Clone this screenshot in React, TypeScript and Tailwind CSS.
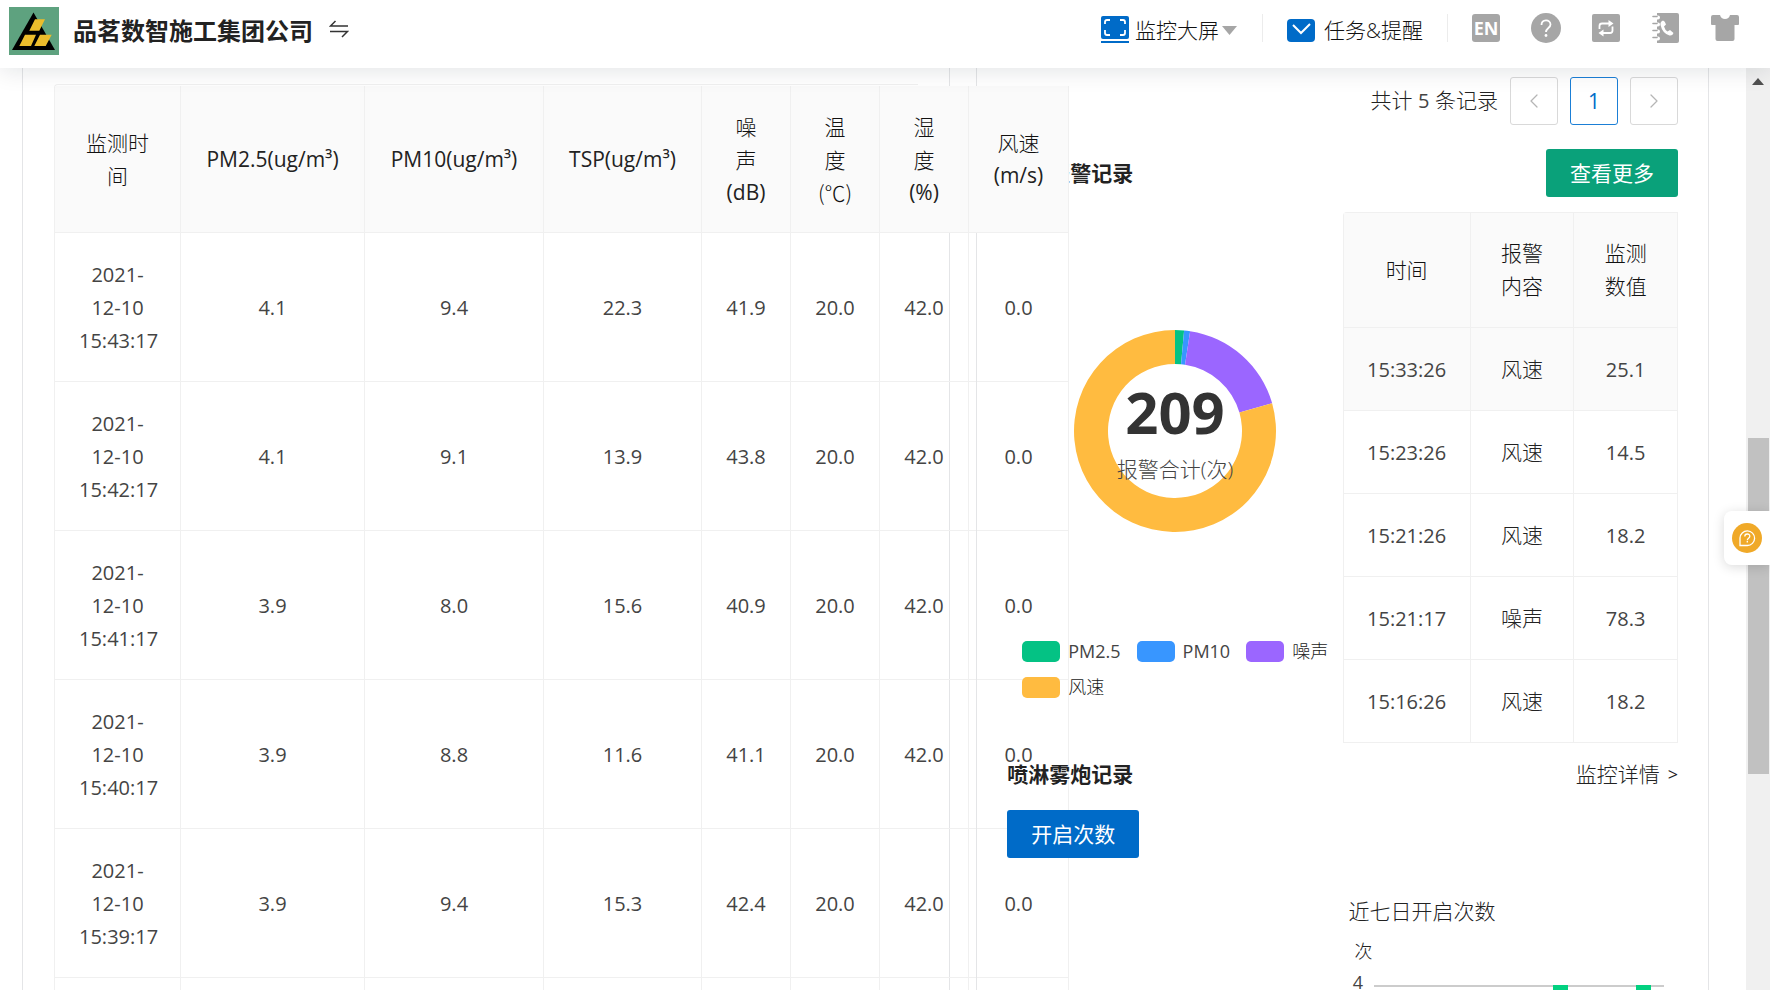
import { ChevronLeft, ChevronRight } from "lucide-react";
import type { ReactNode } from "react";

const readings = [
  { date: "2021-12-10", time: "15:43:17", values: ["4.1", "9.4", "22.3", "41.9", "20.0", "42.0", "0.0"] },
  { date: "2021-12-10", time: "15:42:17", values: ["4.1", "9.1", "13.9", "43.8", "20.0", "42.0", "0.0"] },
  { date: "2021-12-10", time: "15:41:17", values: ["3.9", "8.0", "15.6", "40.9", "20.0", "42.0", "0.0"] },
  { date: "2021-12-10", time: "15:40:17", values: ["3.9", "8.8", "11.6", "41.1", "20.0", "42.0", "0.0"] },
  { date: "2021-12-10", time: "15:39:17", values: ["3.9", "9.4", "15.3", "42.4", "20.0", "42.0", "0.0"] },
  { date: "2021-12-10", time: "15:38:17", values: ["3.9", "9.0", "14.8", "41.6", "20.0", "42.0", "0.0"] },
];

const readingHeads = [
  { title: ["监测时", "间"] },
  { unit: "PM2.5(ug/m³)" },
  { unit: "PM10(ug/m³)" },
  { unit: "TSP(ug/m³)" },
  { title: ["噪", "声"], unit: "(dB)" },
  { title: ["温", "度", "(℃)"] },
  { title: ["湿", "度"], unit: "(%)" },
  { title: ["风速"], unit: "(m/s)" },
];

const alarms = [
  ["15:33:26", "风速", "25.1"],
  ["15:23:26", "风速", "14.5"],
  ["15:21:26", "风速", "18.2"],
  ["15:21:17", "噪声", "78.3"],
  ["15:16:26", "风速", "18.2"],
];

const alarmTypes = [
  { name: "PM2.5", count: 3, color: "#04c284" },
  { name: "PM10", count: 2, color: "#3896ff" },
  { name: "噪声", count: 38, color: "#9b66ff" },
  { name: "风速", count: 166, color: "#ffbb40" },
];

const weeklyStarts = [1, 0, 2, 1, 4, 2, 4];

function TopBar() {
  return (
    <header className="relative z-30 flex h-[68px] shrink-0 items-start justify-between bg-white shadow-[0_2px_24px_rgba(0,21,41,0.12)]">
      <div className="flex h-[62px] items-center pl-[9px]">
        <svg viewBox="0 0 50 48" className="h-12 w-[50px]" aria-hidden>
          <rect width="50" height="48" fill="#5ea27f" />
          <path d="M24.500 5.500L46 43H3Z" fill="#000" />
          <path
            d="M26 12.300h10L30.300 23.700h-10ZM16 27.700h11L22 39H10.300ZM31 27.700h11.700L36.700 39H25.300Z"
            fill="#ecbd2c"
          />
        </svg>
        <h1 className="ml-[14px] text-[24px] leading-8 font-bold text-[#222]">品茗数智施工集团公司</h1>
        <button aria-label="切换" className="mb-1 ml-4">
          <svg viewBox="0 0 20 18" className="h-[18px] w-5" fill="none" stroke="#333" strokeWidth="1.5">
            <path d="M19 6H1.500L6.500 1M1 11.500H18.500L13 17" />
          </svg>
        </button>
      </div>

      <nav className="flex h-14 items-center pr-[31px]">
        <button className="mt-1 flex items-center">
          <svg viewBox="0 0 28 28" className="h-7 w-7" aria-hidden>
            <rect width="28" height="23" rx="2" fill="#006bc8" />
            <rect y="25" width="28" height="2" fill="#006bc8" />
            <path
              d="M4 8V6q0-2 2-2h3M19 4h3q2 0 2 2v2M24 14v3q0 2-2 2h-3M9 19H6q-2 0-2-2v-3"
              fill="none"
              stroke="#fff"
              strokeWidth="1.800"
            />
          </svg>
          <span className="ml-[6px] text-[#111]">监控大屏</span>
          <svg viewBox="0 0 15 9" className="ml-[3px] h-[9px] w-[15px]" aria-hidden>
            <path d="M0 0h15L7.500 9Z" fill="#a6a6a6" />
          </svg>
        </button>
        <span className="mr-6 ml-[25px] h-7 w-px bg-[#ececec]" />
        <button className="mt-1 flex items-center">
          <svg viewBox="0 0 28 23" className="h-[23px] w-7" aria-hidden>
            <rect width="28" height="23" rx="4" fill="#006bc8" />
            <path d="M6 6l8 8 9-9" fill="none" stroke="#fff" strokeWidth="2" />
          </svg>
          <span className="ml-[9px] text-[#111]">任务&amp;提醒</span>
        </button>
        <span className="ml-6 h-7 w-px bg-[#ececec]" />
        <button aria-label="语言" className="ml-6 h-7 w-7">
          <svg viewBox="0 0 28 28" className="h-7 w-7">
            <rect width="28" height="28" rx="3" fill="#a6a6a6" />
            <text x="14" y="21" textAnchor="middle" fontSize="18" fontWeight="700" fill="#fff">
              EN
            </text>
          </svg>
        </button>
        <button aria-label="帮助" className="ml-[31px]">
          <svg viewBox="0 0 30 30" className="h-[30px] w-[30px]" fill="none" stroke="#fff">
            <circle cx="15" cy="15" r="15" fill="#a6a6a6" stroke="none" />
            <path d="M10.500 12c0-6 9-6 9-.5 0 3.500-4.500 3.500-4.500 7.500" strokeWidth="1.800" />
            <circle cx="15" cy="22.500" r="1.400" fill="#fff" stroke="none" />
          </svg>
        </button>
        <button aria-label="切换系统" className="ml-[31px]">
          <svg viewBox="0 0 28 28" className="h-7 w-7" fill="none" stroke="#fff" strokeWidth="1.800">
            <rect width="28" height="28" rx="2" fill="#a6a6a6" stroke="none" />
            <path d="M7.500 15v-3q0-2.500 2.500-2.500h8.500M20.500 12.500v4q0 2.500-2.500 2.500H9.500" />
            <path d="M16.500 6l5 3.500-5 3.500ZM11.500 15.500l-5 3.500 5 3.500Z" fill="#fff" stroke="none" />
          </svg>
        </button>
        <button aria-label="通讯录" className="ml-[31px]">
          <svg viewBox="0 0 28 30" className="h-[30px] w-7">
            <path d="M6 0h20q2 0 2 2v26q0 2-2 2H6Z" fill="#a6a6a6" />
            <g fill="none" stroke="#fff" strokeWidth="4" strokeLinecap="round">
              <path d="M3 4.500h4M3 11.500h4M3 18.500h4M3 25.500h4" />
            </g>
            <g fill="none" stroke="#a6a6a6" strokeWidth="1.600" strokeLinecap="round">
              <path d="M2 3.500h4M2 10.500h4M2 17.500h4M2 24.500h4" />
            </g>
            <path
              d="M12 7.500q-3 1-2.500 4.500 2 8.500 9 10.500 3 .5 4-2.500l-3.500-3-2.500 1.500q-2.500-1.500-3.500-5l2-2Q14 8 12 7.500Z"
              fill="#fff"
            />
          </svg>
        </button>
        <button aria-label="皮肤" className="ml-8">
          <svg viewBox="0 0 28 26" className="h-[26px] w-7">
            <path
              d="M2 0h7q1 4 5 4t5-4h7q2 0 2 2v7q0 1-1 1h-3.500v14q0 2-2 2h-15q-2 0-2-2V10H1Q0 10 0 9V2q0-2 2-2Z"
              fill="#a6a6a6"
            />
          </svg>
        </button>
      </nav>
    </header>
  );
}

function ReadingTable() {
  return (
    <section className="min-w-0 border-x border-[#e4e5e7] px-[31px] pt-4">
      <div className="rounded-tl border-t border-l border-[#f0f0f0]">
        <table className="mt-px w-[1014px] table-fixed border-separate border-spacing-0 text-center">
          <colgroup>
            <col className="w-[126px]" />
            <col className="w-[184px]" />
            <col className="w-[179px]" />
            <col className="w-[158px]" />
            <col className="w-[89px]" />
            <col className="w-[89px]" />
            <col className="w-[89px]" />
            <col className="w-[100px]" />
          </colgroup>
          <thead>
            <tr className="h-[147px]">
              {readingHeads.map(({ title = [], unit }, i) => (
                <th
                  key={i}
                  scope="col"
                  className="relative z-10 border-r border-b border-[#f0f0f0] bg-[#fafafa] font-normal text-[#222]"
                >
                  {title.map((line) => (
                    <span key={line} className="block font-['Noto_Sans_CJK_SC',sans-serif] font-light text-[#111]">
                      {line}
                    </span>
                  ))}
                  {unit}
                </th>
              ))}
            </tr>
          </thead>
          <tbody className="text-[20px] font-normal text-[#444]">
            {readings.map((r) => (
              <tr key={r.time} className="h-[149px]">
                <td className="border-r border-b border-[#f0f0f0] px-6">
                  {r.date} {r.time}
                </td>
                {r.values.map((v, i) => (
                  <td key={i} className="border-r border-b border-[#f0f0f0]">
                    {v}
                  </td>
                ))}
              </tr>
            ))}
          </tbody>
        </table>
      </div>
    </section>
  );
}

function polar(angle: number, radius: number) {
  return `${101 + radius * Math.sin(angle)} ${101 - radius * Math.cos(angle)}`;
}

function AlarmDonut() {
  const total = alarmTypes.reduce((sum, t) => sum + t.count, 0);
  let start = 0;
  const slices = alarmTypes.map((t) => {
    const end = start + (t.count / total) * Math.PI * 2;
    const large = end - start > Math.PI ? 1 : 0;
    const d = `M${polar(start, 101)}A101 101 0 ${large} 1 ${polar(end, 101)}L${polar(end, 67)}A67 67 0 ${large} 0 ${polar(start, 67)}Z`;
    start = end;
    return <path key={t.name} d={d} fill={t.color} />;
  });

  return (
    <div className="w-1/2 pt-[118px]">
      <svg viewBox="0 0 202 202" className="mx-auto h-[202px] w-[202px]">
        {slices}
        <text x="101" y="104" textAnchor="middle" fontSize="58" fontWeight="700" fill="#333">
          {total}
        </text>
        <text x="101" y="147" textAnchor="middle" fontSize="21" fill="#444">
          报警合计(次)
        </text>
      </svg>
      <ul className="mt-[109px] flex flex-wrap gap-x-4 gap-y-[15px] pl-[15px] text-[18px] leading-[21px]">
        {alarmTypes.map((t) => (
          <li key={t.name} className="flex items-center gap-2">
            <span className="h-[21px] w-[38px] rounded-[5px]" style={{ background: t.color }} />
            {t.name.startsWith("PM") ? <span className="font-normal text-[#444]">{t.name}</span> : t.name}
          </li>
        ))}
      </ul>
    </div>
  );
}

function AlarmTable() {
  return (
    <div className="w-1/2">
      <table className="w-full table-fixed border-separate border-spacing-0 rounded-tl border-t border-l border-[#f0f0f0] text-center">
        <colgroup>
          <col className="w-[38%]" />
          <col className="w-[31%]" />
          <col className="w-[31%]" />
        </colgroup>
        <thead>
          <tr className="h-[115px] bg-[#fafafa]">
            {["时间", "报警内容", "监测数值"].map((h) => (
              <th key={h} scope="col" className="border-r border-b border-[#f0f0f0] px-6 font-light text-[#111]">
                {h}
              </th>
            ))}
          </tr>
        </thead>
        <tbody>
          {alarms.map(([time, type, value]) => (
            <tr key={time} className="h-[83px] first:bg-[#fafafa]">
              <td className="border-r border-b border-[#f0f0f0] text-[20px] font-normal text-[#444]">{time}</td>
              <td className="border-r border-b border-[#f0f0f0]">{type}</td>
              <td className="border-r border-b border-[#f0f0f0] text-[20px] font-normal text-[#444]">{value}</td>
            </tr>
          ))}
        </tbody>
      </table>
    </div>
  );
}

function PageButton({ label, active, children }: { label: string; active?: boolean; children: ReactNode }) {
  return (
    <button
      aria-label={label}
      className={
        active
          ? "grid size-12 place-items-center rounded-[3px] border border-[#1b7fd6] bg-white font-medium text-[#006bc8]"
          : "grid size-12 place-items-center rounded-[3px] border border-[#d9d9d9] bg-white text-[#b5b5b5]"
      }
    >
      {children}
    </button>
  );
}

function StartsChart() {
  return (
    <div className="ml-auto w-1/2 pl-[6px]">
      <h3>近七日开启次数</h3>
      <p className="mt-[10px] pl-[6px] text-[18px] leading-[27px]">次</p>
      <svg viewBox="0 0 316 200" className="mt-1 h-[200px] w-[316px]">
        {[0, 1, 2, 3, 4].map((n) => (
          <g key={n}>
            <line x1="25" x2="315" y1={177 - n * 40} y2={177 - n * 40} stroke="#ccc" strokeWidth="2" />
            <text x="14" y={180 - n * 40} textAnchor="end" fontSize="18" fontWeight="400" fill="#444">
              {n}
            </text>
          </g>
        ))}
        {weeklyStarts.map((n, i) => (
          <rect key={i} x={38 + i * 41.5} y={176 - n * 40} width="15" height={n * 40} fill="#02d180" />
        ))}
      </svg>
    </div>
  );
}

function AlarmPanel() {
  return (
    <section className="min-w-0 border-x border-[#e4e5e7] px-[30px] pt-[9px]">
      <div className="flex items-center justify-end gap-3">
        <span className="pb-0.5">
          共计 <span className="text-[20px] font-normal text-[#444]">5</span> 条记录
        </span>
        <PageButton label="上一页">
          <ChevronLeft className="size-6" strokeWidth={1.25} />
        </PageButton>
        <PageButton label="第 1 页" active>
          1
        </PageButton>
        <PageButton label="下一页">
          <ChevronRight className="size-6" strokeWidth={1.25} />
        </PageButton>
      </div>

      <div className="mt-6 flex items-center justify-between">
        <h2 className="font-bold text-[#222]">环境报警记录</h2>
        <button className="h-12 rounded-[3px] bg-[#0aa17a] px-6 font-normal text-white">查看更多</button>
      </div>
      <div className="mt-[15px] flex">
        <AlarmDonut />
        <AlarmTable />
      </div>

      <div className="mt-[15px] flex items-center justify-between">
        <h2 className="font-bold text-[#222]">喷淋雾炮记录</h2>
        <a href="#monitor" className="flex items-center gap-2">
          监控详情 <span className="text-[18px] font-normal">&gt;</span>
        </a>
      </div>
      <button className="mt-[19px] h-12 rounded-[3px] bg-[#006bc8] px-6 font-normal text-white">开启次数</button>
      <div className="mt-[37px]">
        <StartsChart />
      </div>
    </section>
  );
}

export default function App() {
  return (
    <div className="flex h-screen flex-col overflow-hidden bg-white font-['Open_Sans','Noto_Sans_CJK_SC',sans-serif] text-[21px] leading-[33px] font-light text-[#222]">
      <TopBar />
      <div className="flex min-h-0 flex-1">
        <main className="grid min-w-0 flex-1 grid-cols-[minmax(0,38fr)_minmax(0,30fr)] gap-[26px] overflow-hidden pr-[37px] pl-[22px]">
          <ReadingTable />
          <AlarmPanel />
        </main>
        <aside className="flex w-6 flex-col items-center bg-[#f0f0f0] pt-[10px]">
          <svg viewBox="0 0 12 7" className="h-[7px] w-3" aria-hidden>
            <path d="M6 0l6 7H0Z" fill="#505050" />
          </svg>
          <div className="mt-[353px] h-[336px] w-[21px] bg-[#c1c1c1]" />
        </aside>
      </div>

      <button
        aria-label="在线客服"
        className="fixed top-1/2 right-0 z-40 mt-4 rounded-l-lg bg-white py-3 pr-2 pl-2 shadow-[0_2px_12px_rgba(0,0,0,0.15)]"
      >
        <svg viewBox="0 0 30 30" className="size-[30px]" fill="none" stroke="#fff" strokeWidth="1.300">
          <circle cx="15" cy="15" r="15" fill="#f0a928" stroke="none" />
          <path d="M8 22.500V15a7.300 7.300 0 1 1 7.300 7.500Z" />
          <path d="M12.800 13.500c0-3.300 5-3.300 5-.3 0 2-2.500 2-2.500 4M15.300 18v1.500" />
        </svg>
      </button>
    </div>
  );
}
